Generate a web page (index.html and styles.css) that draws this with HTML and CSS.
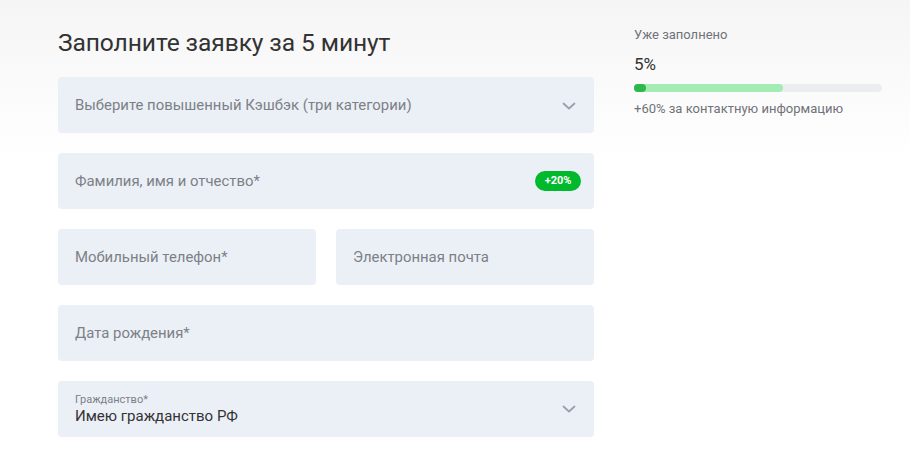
FILE: index.html
```html
<!DOCTYPE html>
<html lang="ru">
<head>
<meta charset="utf-8">
<link rel="stylesheet" href="styles.css">
</head>
<body>
<div class="page">
  <main class="form">
    <h1 class="title">Заполните заявку за 5 минут</h1>
    <div class="field select">
      <span class="placeholder">Выберите повышенный Кэшбэк (три категории)</span>
      <svg class="chevron" width="14" height="8" viewBox="0 0 14 8"><path d="M1.5 1.5l5.5 5 5.5-5" fill="none" stroke="#9aa0a8" stroke-width="1.8" stroke-linecap="round" stroke-linejoin="round"/></svg>
    </div>
    <div class="field">
      <span class="placeholder">Фамилия, имя и отчество*</span>
      <span class="badge">+20%</span>
    </div>
    <div class="row">
      <div class="field"><span class="placeholder">Мобильный телефон*</span></div>
      <div class="field"><span class="placeholder">Электронная почта</span></div>
    </div>
    <div class="field"><span class="placeholder">Дата рождения*</span></div>
    <div class="field select filled">
      <div class="value-wrap">
        <span class="label">Гражданство*</span>
        <span class="value">Имею гражданство РФ</span>
      </div>
      <svg class="chevron" width="14" height="8" viewBox="0 0 14 8"><path d="M1.5 1.5l5.5 5 5.5-5" fill="none" stroke="#9aa0a8" stroke-width="1.8" stroke-linecap="round" stroke-linejoin="round"/></svg>
    </div>
  </main>
  <aside class="progress">
    <div class="progress-label">Уже заполнено</div>
    <div class="progress-value">5%</div>
    <div class="bar">
      <div class="bar-pending" style="width:149px"></div>
      <div class="bar-done" style="width:12px"></div>
    </div>
    <div class="progress-hint">+60% за контактную информацию</div>
  </aside>
</div>
</body>
</html>
```
FILE: styles.css
```css
html, body {
  margin: 0;
  padding: 0;
}
body {
  font-family: Roboto, "Noto Sans", sans-serif;
  background: linear-gradient(to bottom, #f5f5f5 0px, #ffffff 160px) no-repeat;
  background-color: #fff;
  height: 474px;
  overflow: hidden;
}
.page {
  display: flex;
  padding-left: 58px;
  gap: 40px;
}
.form {
  width: 536px;
  display: flex;
  flex-direction: column;
  gap: 20px;
}
.title {
  margin: 27px 0 -1px;
  font-weight: 400;
  font-size: 24.6px;
  line-height: 31px;
  color: #333333;
  letter-spacing: -0.1px;
}
.field {
  height: 56px;
  box-sizing: border-box;
  background: #ebf0f7;
  border-radius: 4px;
  display: flex;
  align-items: center;
  justify-content: space-between;
  padding: 0 14px 0 17px;
  flex: 1;
}
.form > .field {
  flex: none;
}
.select {
  padding-right: 18px;
}
.placeholder {
  font-size: 14.9px;
  color: #7d8086;
}
.chevron {
  display: block;
  margin-top: 2px;
}
.badge {
  background: #00b92d;
  color: #fff;
  font-size: 11px;
  font-weight: 700;
  border-radius: 10px;
  height: 20px;
  line-height: 20px;
  padding: 0 9.5px;
  margin-right: -1px;
}
.row {
  display: flex;
  gap: 20px;
}
.value-wrap {
  display: flex;
  flex-direction: column;
}
.label {
  font-size: 11px;
  line-height: 13px;
  color: #7d8086;
}
.value {
  font-size: 15px;
  line-height: 20px;
  color: #333333;
}
.filled .chevron {
  margin-top: 0;
}
.progress {
  width: 248px;
  padding-top: 27px;
}
.progress-label {
  font-size: 13px;
  line-height: 16px;
  color: #6f7277;
}
.progress-value {
  margin-top: 11px;
  font-size: 17px;
  line-height: 21px;
  color: #333333;
}
.bar {
  margin-top: 9px;
  height: 8px;
  border-radius: 4px;
  background: #ebedf0;
  position: relative;
}
.bar-pending {
  position: absolute;
  left: 0;
  top: 0;
  height: 8px;
  border-radius: 4px;
  background: #a4ecb3;
}
.bar-done {
  position: absolute;
  left: 0;
  top: 0;
  height: 8px;
  border-radius: 4px;
  background: #2eb84b;
}
.progress-hint {
  margin-top: 9px;
  font-size: 13px;
  line-height: 16px;
  color: #6f7277;
}
```
